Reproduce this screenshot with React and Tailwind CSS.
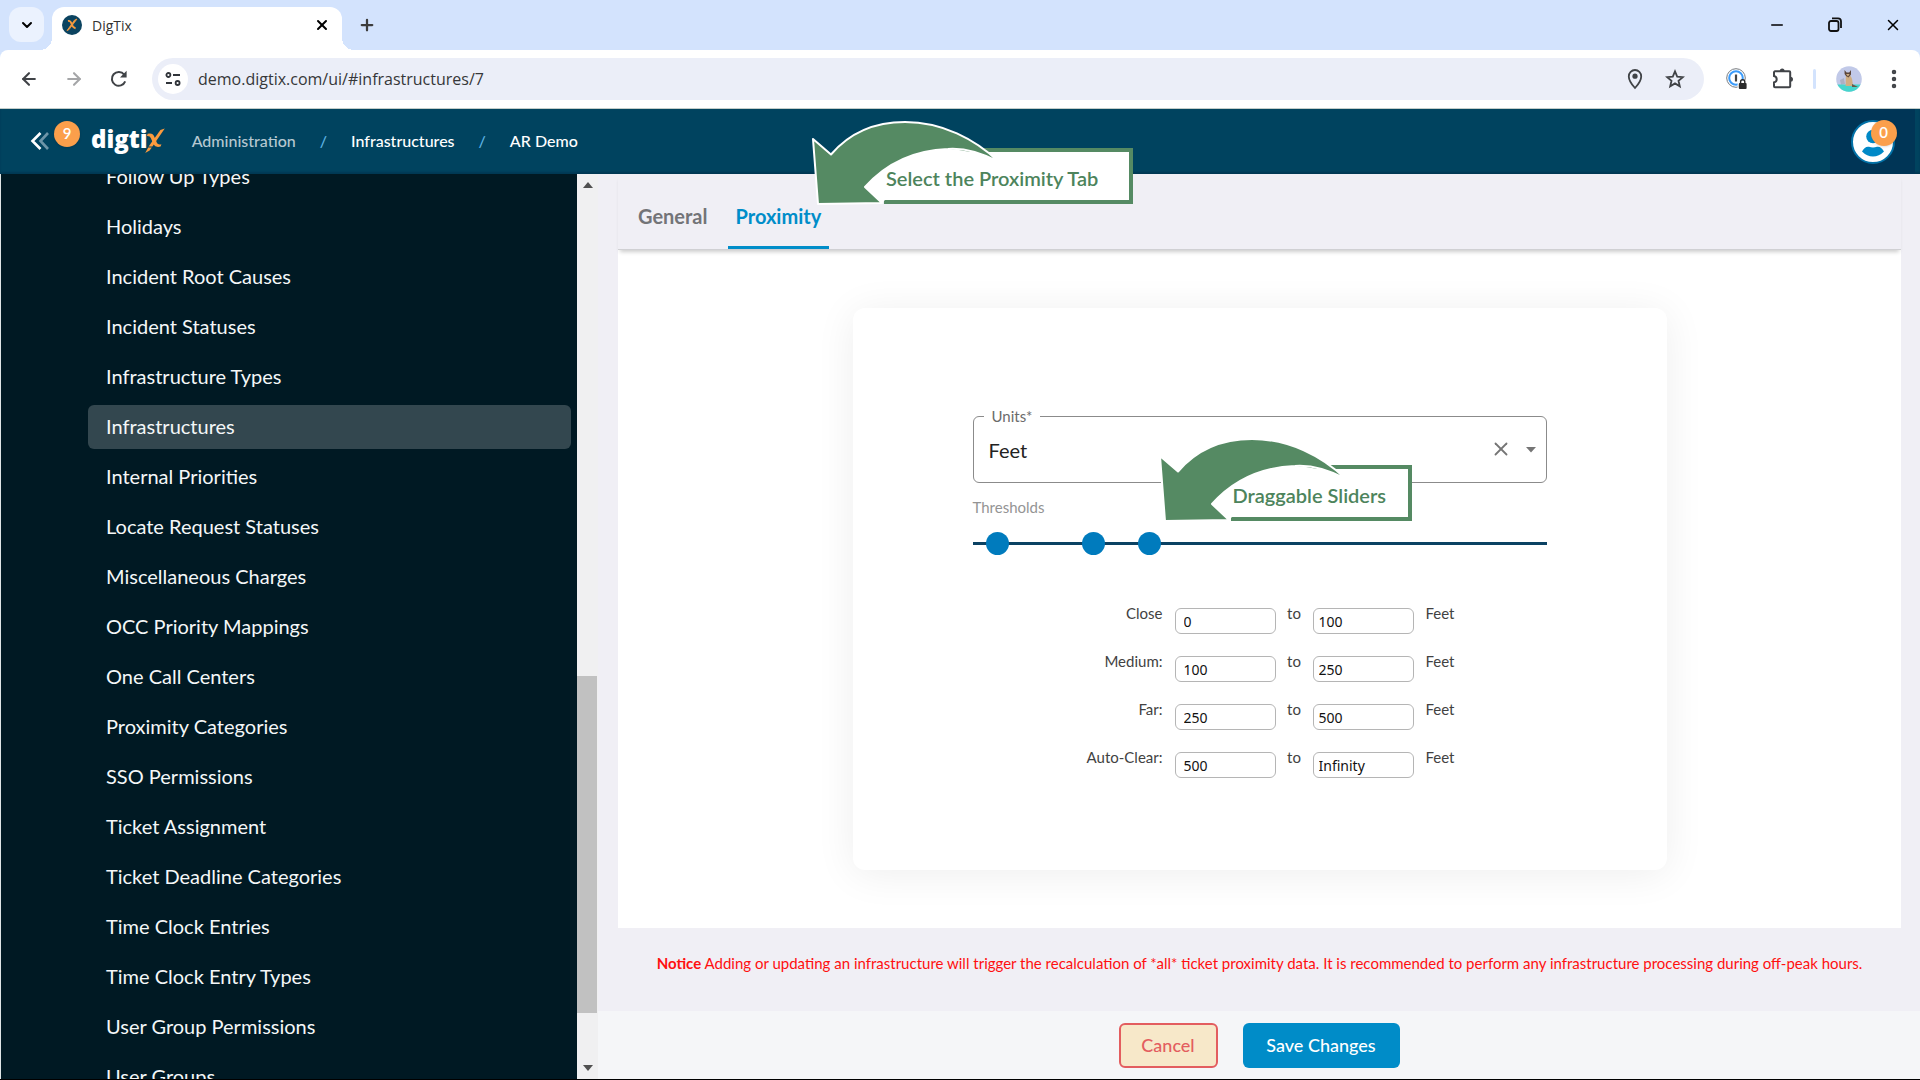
import { useState } from 'react';
import { ArrowLeft, ArrowRight, ChevronDown, Minus, Plus, X, EllipsisVertical } from 'lucide-react';

const menuItems = [
    'Follow Up Types',
    'Holidays',
    'Incident Root Causes',
    'Incident Statuses',
    'Infrastructure Types',
    'Infrastructures',
    'Internal Priorities',
    'Locate Request Statuses',
    'Miscellaneous Charges',
    'OCC Priority Mappings',
    'One Call Centers',
    'Proximity Categories',
    'SSO Permissions',
    'Ticket Assignment',
    'Ticket Deadline Categories',
    'Time Clock Entries',
    'Time Clock Entry Types',
    'User Group Permissions',
    'User Groups',
];

const thresholds = [
    { id: 'close', label: 'Close', from: '0', to: '100' },
    { id: 'medium', label: 'Medium:', from: '100', to: '250' },
    { id: 'far', label: 'Far:', from: '250', to: '500' },
    { id: 'auto-clear', label: 'Auto-Clear:', from: '500', to: 'Infinity' },
];

const Favicon = () => (
    <svg viewBox="0 0 20 20" className="w-5 h-5">
        <circle cx="10" cy="10" r="10" fill="#0b4360" />
        <path d="M15 4 L12.6 5 L5 15.6 L7 14.6 Z" fill="#f79a3e" stroke="#f79a3e" strokeWidth="0.8" />
        <path d="M6 6 Q8.5 5.4 9.6 9 T13.6 13.4" fill="none" stroke="#f79a3e" strokeWidth="1.8" />
    </svg>
);

const ReloadIcon = () => (
    <svg viewBox="0 0 18 18" className="w-[18px] h-[18px]">
        <path d="M15.2 11.4 A6.9 6.9 0 1 1 14.2 4.6" fill="none" stroke="#404347" strokeWidth="2" />
        <path d="M16.6 0.8 V7.4 H10 Z" fill="#404347" />
    </svg>
);

const SiteInfoIcon = () => (
    <svg viewBox="0 0 16 16" className="w-4 h-4" fill="none" stroke="#30343a" strokeWidth="1.8">
        <circle cx="3.4" cy="4" r="2" />
        <path d="M8 4h7M1 12h6" />
        <circle cx="12.6" cy="12" r="2" />
    </svg>
);

const LocationIcon = () => (
    <svg viewBox="0 0 20 22" className="w-5 h-[22px]">
        <path d="M10 20 C6 15.6 3.8 12.2 3.8 8.4 A6.2 6.4 0 0 1 16.2 8.4 C16.2 12.2 14 15.6 10 20 Z" fill="none" stroke="#404347" strokeWidth="1.8" />
        <circle cx="10" cy="8.2" r="2.6" fill="#404347" />
    </svg>
);

const StarIcon = () => (
    <svg viewBox="0 0 20 20" className="w-5 h-5">
        <path
            d="M10 2.4 L12.2 7.6 L17.8 8.1 L13.5 11.8 L14.8 17.3 L10 14.4 L5.2 17.3 L6.5 11.8 L2.2 8.1 L7.8 7.6 Z"
            fill="none"
            stroke="#404347"
            strokeWidth="1.8"
        />
    </svg>
);

const PasswordIcon = () => (
    <svg viewBox="0 0 22 22" className="w-[22px] h-[22px]" fill="none">
        <circle cx="10" cy="10" r="9.3" stroke="#777b80" strokeWidth="1" />
        <circle cx="10" cy="10" r="6.8" stroke="#3b9bfa" strokeWidth="2" />
        <path d="M10 6.5v7" stroke="#444" strokeWidth="2.2" />
        <path d="M11.6 12.2h10.4v9.8h-10.4z" fill="#fff" />
        <rect x="12.8" y="15" width="7.8" height="6" rx="1" fill="#2b2b2b" />
        <path d="M14.6 15.4v-1.6a2.1 2.1 0 0 1 4.2 0v1.6" stroke="#2b2b2b" strokeWidth="1.4" />
    </svg>
);

const PuzzleIcon = () => (
    <svg viewBox="0 0 22 22" className="w-[22px] h-[22px]">
        <path
            d="M3.5 3.3 H17.2 a1 1 0 0 1 1 1 V18.3 a1 1 0 0 1 -1 1 H3 a1 1 0 0 1 -1 -1 V14.4 C5.6 13.6 5.6 8.8 2 8 V4.3 a1 1 0 0 1 1 -1 Z"
            fill="none"
            stroke="#404347"
            strokeWidth="2"
        />
        <path d="M7.8 3 a2.4 2.6 0 0 1 4.8 0 Z M18.4 8.8 a2.6 2.5 0 0 1 0 5 Z" fill="#404347" />
    </svg>
);

const ProfilePicture = () => (
    <svg viewBox="0 0 26 26" className="w-[26px] h-[26px]">
        <defs>
            <clipPath id="profile-clip">
                <circle cx="13" cy="13" r="12.8" />
            </clipPath>
        </defs>
        <g clipPath="url(#profile-clip)">
            <rect width="26" height="26" fill="#c1c9e8" />
            <path d="M4 14 L8 12 L9 18 L5 19 Z" fill="#aab0c4" />
            <rect y="18.5" width="26" height="8" fill="#45d6cd" />
            <path d="M10 9 L14 9 Q17.4 14 16.5 20 H9.6 Q9.5 14 10 9" fill="#cfae83" />
            <path d="M16 18 L22 21 L16 21 Z" fill="#6b5848" />
            <path d="M8.5 4 L10.6 6.5 L13.2 6.5 L15 4 L15 8.4 L12.4 11.4 L10 10 L8.6 8 Z" fill="#5b4639" />
            <path d="M10 8 L13.6 8 L12 10.4 Z" fill="#cfae83" />
        </g>
    </svg>
);

const BrandMark = () => (
    <svg viewBox="0 0 22 26" className="w-[22px] h-[26px] -ml-1">
        <path d="M20.8 0.5 L16.4 2 L4.6 18.4 L8.4 18.4 Z" fill="#fb9b3e" />
        <path d="M4.2 19.4 L7.8 19.4 L5.6 22.4 L1.2 25 Z" fill="#fb9b3e" />
        <path d="M3.6 5.8 Q8.8 4.4 10.2 8.6 L13 15 Q13.8 17 17.4 16.2 L16.6 18.6 Q11.4 19.8 9.6 16.6 L6.8 10 Q6 7.8 3 8 Z" fill="#fb9b3e" />
    </svg>
);

const UserIcon = () => (
    <svg viewBox="0 0 44 44" className="w-11 h-11">
        <circle cx="22" cy="22" r="21" fill="#fff" stroke="#0272a8" strokeWidth="2" />
        <circle cx="22" cy="16.5" r="6.8" fill="#0089c7" />
        <path d="M11 31.5 Q14 26 18 26.8 Q22 28.4 26 26.8 Q30 26 33 31.5 Q28 36.6 22 36.6 Q16 36.6 11 31.5" fill="#0089c7" />
    </svg>
);

const Callout = ({ children }) => (
    <div className="relative pl-[72px] pt-[27px]">
        <div className="h-14 border-4 border-l-0 border-[#558a63] bg-white" />
        <svg viewBox="0 0 190 88" className="absolute left-0 top-0 w-[190px] h-[88px]">
            <path d="M53 66 C78 38 108 28 136 28 C158 29 175 35 188 42 L188 56 L74 78 L70 82 Z" fill="#fff" />
            <path
                d="M1 18 L19 33.5 C40 9 66 1 93 1 C130 1 163 18 187 41 C168 31 150 27 136 28 C108 29 78 38 53 66 L70 82 L6 83 Z"
                fill="#558a63"
                stroke="#fff"
                strokeWidth="2"
                strokeLinejoin="round"
            />
        </svg>
        <div className="absolute inset-x-0 top-[29px] h-14 pl-[74px] flex items-center text-xl font-semibold text-[#4d845c] whitespace-nowrap">
            {children}
        </div>
    </div>
);

const BrowserBar = () => (
    <div className="shrink-0 bg-[#d3e3fd]">
        <div className="flex items-end h-[50px] pl-[9px]">
            <button aria-label="Search tabs" className="w-[35px] h-[35px] mb-2 rounded-xl bg-[#ebf2fe] flex items-center justify-center">
                <ChevronDown className="w-4 h-4" strokeWidth={3} />
            </button>
            <div className="relative ml-2 w-[290px] h-[43px] rounded-t-xl bg-white flex items-center pl-[10px] pr-3 pb-2">
                <span className="absolute bottom-0 -left-3 w-3 h-3 bg-[radial-gradient(circle_at_0_0,transparent_12px,white_12px)]"></span>
                <span className="absolute bottom-0 -right-3 w-3 h-3 bg-[radial-gradient(circle_at_100%_0,transparent_12px,white_12px)]"></span>
                <Favicon />
                <span className="ml-[10px] pt-0.5 flex-1 font-['Open_Sans'] text-sm text-[#333]">DigTix</span>
                <button aria-label="Close tab">
                    <X className="w-4 h-4" strokeWidth={3} />
                </button>
            </div>
            <button aria-label="New tab" className="ml-4 mb-4">
                <Plus className="w-[18px] h-[18px] text-[#3c3c3c]" strokeWidth={3} />
            </button>
            <div className="ml-auto mb-4 flex items-center gap-10 pr-[18px]">
                <button aria-label="Minimize"><Minus className="w-[18px] h-[18px]" strokeWidth={2} /></button>
                <button aria-label="Restore">
                    <svg viewBox="0 0 18 18" className="w-[18px] h-[18px]" fill="none" stroke="#111" strokeWidth="1.8">
                        <rect x="3" y="5" width="9.5" height="10" rx="2" />
                        <path d="M6 2.4h6a3 3 0 0 1 3 3v6.6" />
                    </svg>
                </button>
                <button aria-label="Close window"><X className="w-[18px] h-[18px]" strokeWidth={2} /></button>
            </div>
        </div>
        <div className="flex items-center h-[58px] bg-white rounded-t-lg pl-[19px] pr-[14px] text-[#404347]">
            <button aria-label="Back"><ArrowLeft className="w-5 h-5" strokeWidth={2.5} /></button>
            <button aria-label="Forward" className="ml-[25px] text-[#a5a6a8]"><ArrowRight className="w-5 h-5" strokeWidth={2.5} /></button>
            <button aria-label="Reload" className="ml-[26px]"><ReloadIcon /></button>
            <div className="ml-6 flex-1 h-[42px] rounded-full bg-[#ebeef8] flex items-center pl-1.5 pr-[19px]">
                <span className="w-[30px] h-[30px] rounded-full bg-white flex items-center justify-center">
                    <SiteInfoIcon />
                </span>
                <input
                    aria-label="Address"
                    defaultValue="demo.digtix.com/ui/#infrastructures/7"
                    className="ml-[10px] flex-1 bg-transparent outline-none font-['Open_Sans'] text-base text-[#363739]"
                />
                <LocationIcon />
                <span className="ml-5"><StarIcon /></span>
            </div>
            <div className="ml-[22px] flex items-center">
                <button aria-label="Password manager"><PasswordIcon /></button>
                <button aria-label="Extensions" className="ml-6"><PuzzleIcon /></button>
                <span className="ml-[19px] w-[3px] h-5 rounded bg-[#d3e3fd]"></span>
                <button aria-label="Profile" className="ml-5"><ProfilePicture /></button>
                <button aria-label="Menu" className="ml-5"><EllipsisVertical className="w-6 h-6" strokeWidth={2.5} /></button>
            </div>
        </div>
    </div>
);

const Header = () => (
    <header className="shrink-0 h-[66px] flex items-center bg-[#00435f] border-t border-[#c3cdca] shadow-[inset_0_-2px_2px_#003853] text-white">
        <button aria-label="Collapse menu" className="relative ml-[30px] mb-0.5 w-12 h-12 flex items-center">
            <svg viewBox="0 0 20 20" className="w-5 h-5" fill="none" strokeWidth="2.6">
                <path d="M18 2 L10.5 10 L18 18" stroke="#6d95a8" />
                <path d="M10.5 2 L2.5 10 L10.5 18" stroke="#fff" />
            </svg>
            <span className="absolute left-6 top-1 w-[26px] h-[26px] rounded-full bg-[#fb9f4b] shadow flex items-center justify-center text-[15px] font-semibold">9</span>
        </button>
        <a href="#home" className="ml-[13px] mb-0.5 flex items-center">
            <span className="font-['Open_Sans'] text-2xl leading-6 font-extrabold pb-1">digti</span>
            <BrandMark />
        </a>
        <nav className="ml-[26px] mb-0.5 flex items-center text-base font-medium">
            <a href="#administration" className="text-[#b6c8d1]">Administration</a>
            <span className="mx-6 text-[#5fb5e5]">/</span>
            <a href="#infrastructures">Infrastructures</a>
            <span className="mx-6 text-[#5fb5e5]">/</span>
            <a href="#infrastructures/7">AR Demo</a>
        </nav>
        <button aria-label="Account" className="ml-auto mr-[5px] w-[85px] h-full bg-[#003556] flex items-center justify-center">
            <span className="relative">
                <UserIcon />
                <span className="absolute -right-0.5 top-0 w-[26px] h-[26px] rounded-full bg-[#fb9f4b] shadow flex items-center justify-center text-[15px] font-semibold">0</span>
            </span>
        </button>
    </header>
);

const Sidebar = () => (
    <aside className="w-[598px] shrink-0 flex border-l border-[#dfe5e6]">
        <div className="flex-1 overflow-hidden bg-[#001923]">
            <ul className="-mt-[19px] ml-[87px] mr-1.5 flex flex-col gap-1.5">
                {menuItems.map((item) => (
                    <li key={item}>
                        <a
                            href="#menu"
                            className={`flex items-center h-11 px-[18px] pb-0.5 rounded-md text-xl text-[#f4f7f8] ${item === 'Infrastructures' ? 'bg-[#33474f]' : ''}`}
                        >
                            {item}
                        </a>
                    </li>
                ))}
            </ul>
        </div>
        <div className="w-[21px] bg-[#f0f0f1] flex flex-col items-center justify-between py-2">
            <svg viewBox="0 0 10 6" className="w-[10px] h-[6px]"><path d="M0 6 L5 0 L10 6 Z" fill="#505050" /></svg>
            <div className="flex-1 w-full flex flex-col justify-end pr-px pb-[52px]">
                <div className="h-[337px] bg-[#c1c1c1]"></div>
            </div>
            <svg viewBox="0 0 10 6" className="w-[10px] h-[6px]"><path d="M0 0 L5 6 L10 0 Z" fill="#505050" /></svg>
        </div>
    </aside>
);

const UnitsField = () => {
    const [units, setUnits] = useState('feet');

    return (
        <div className="relative">
            <label htmlFor="units" className="absolute -top-2 left-[11px] px-2 bg-white text-[15px] leading-4 text-[#6b6b6b]">Units*</label>
            <select
                id="units"
                value={units}
                onChange={(e) => setUnits(e.target.value)}
                className="w-full h-[67px] appearance-none rounded-md border border-[#8b8b8b] bg-transparent pl-[15px] text-xl text-[#222]"
            >
                <option value=""></option>
                <option value="feet">Feet</option>
                <option value="meters">Meters</option>
            </select>
            <button aria-label="Clear units" onClick={() => setUnits('')} className="absolute right-[35px] top-[22px]">
                <X className="w-[22px] h-[22px] text-[#757575]" strokeWidth={2} />
            </button>
            <svg viewBox="0 0 10 6" className="absolute right-[11px] top-[31px] w-[10px] h-[6px] pointer-events-none">
                <path d="M0 0 L5 5.5 L10 0 Z" fill="#757575" />
            </svg>
            <div className="absolute left-[186px] top-[22px] w-[253px]">
                <Callout>Draggable Sliders</Callout>
            </div>
        </div>
    );
};

const ThresholdSlider = () => {
    const [stops, setStops] = useState([25, 199, 301]);

    const moveStop = (index, value) => {
        setStops(stops.map((stop, i) => (i === index ? Number(value) : stop)));
    };

    return (
        <div className="relative h-6 flex items-center">
            <div className="w-full h-[3px] bg-[#0b4263]"></div>
            {stops.map((stop, index) => (
                <input
                    key={index}
                    type="range"
                    min="0"
                    max="1000"
                    value={stop}
                    onChange={(e) => moveStop(index, e.target.value)}
                    aria-label={`Threshold ${index + 1}`}
                    className="absolute inset-0 w-full h-6 appearance-none bg-transparent pointer-events-none [&::-webkit-slider-thumb]:pointer-events-auto [&::-webkit-slider-thumb]:appearance-none [&::-webkit-slider-thumb]:w-[23px] [&::-webkit-slider-thumb]:h-[23px] [&::-webkit-slider-thumb]:rounded-full [&::-webkit-slider-thumb]:bg-[#007bbd]"
                />
            ))}
        </div>
    );
};

const ProximityForm = () => (
    <div className="w-full max-w-[814px] rounded-xl bg-white px-[120px] pt-[108px] pb-[92px] shadow-[0_4px_40px_rgba(0,0,0,0.07)]">
        <UnitsField />
        <p className="mt-3.5 leading-5 text-[15px] text-[#949494]">Thresholds</p>
        <div className="mt-3.5">
            <ThresholdSlider />
        </div>
        <div className="mt-12 flex flex-col gap-[17px]">
            {thresholds.map((row) => (
                <div key={row.id} className="flex items-start text-[15px] leading-5 text-[#424242]">
                    <label htmlFor={`${row.id}-from`} className="w-[190px] text-right">{row.label}</label>
                    <input
                        id={`${row.id}-from`}
                        defaultValue={row.from}
                        className="ml-3 mt-[5px] w-[101px] h-[26px] rounded-md border border-[#b5b5b5] pl-2 font-['Noto_Sans'] text-sm text-[#111]"
                    />
                    <label htmlFor={`${row.id}-to`} className="w-[37px] text-center">to</label>
                    <input
                        id={`${row.id}-to`}
                        defaultValue={row.to}
                        className="mt-[5px] w-[101px] h-[26px] rounded-md border border-[#b5b5b5] pl-[5px] font-['Noto_Sans'] text-sm text-[#111]"
                    />
                    <span className="ml-3">Feet</span>
                </div>
            ))}
        </div>
    </div>
);

export default function App() {
    return (
        <div className="h-screen flex flex-col overflow-hidden font-['Lato',sans-serif] border-b border-black">
            <BrowserBar />
            <Header />
            <div className="flex-1 min-h-0 flex">
                <Sidebar />
                <main className="relative flex-1 min-w-0 flex flex-col bg-[#f0eff5]">
                    <div className="flex-1 min-h-0 flex flex-col pl-5 pr-[19px]">
                        <div className="relative h-[76px] shrink-0 flex items-end pl-3 border-b border-[#d0d0d3] shadow-[0_4px_4px_-2px_rgba(0,0,0,0.2)] text-xl font-bold">
                            <button className="h-[62px] px-2 pb-1 text-[#737478]">General</button>
                            <button className="ml-3 h-[62px] px-2 pb-px border-b-[3px] border-[#008dc9] text-[#008dc9]">Proximity</button>
                        </div>
                        <section className="flex-1 flex items-center justify-center bg-white">
                            <ProximityForm />
                        </section>
                        <p className="h-[83px] shrink-0 pb-3 flex items-center justify-center text-[15px] text-[#ff1010]">
                            <span><strong>Notice</strong> Adding or updating an infrastructure will trigger the recalculation of *all* ticket proximity data. It is recommended to perform any infrastructure processing during off-peak hours.</span>
                        </p>
                    </div>
                    <footer className="h-[68px] shrink-0 flex items-center justify-center gap-[25px] bg-[#f5f6f8] text-lg font-medium">
                        <button className="w-[99px] h-[45px] rounded-md border-2 border-[#e35d5f] bg-[#f7e8c9] text-[#e35d5f]">Cancel</button>
                        <button className="w-[157px] h-[45px] rounded-md bg-[#008cc8] text-white">Save Changes</button>
                    </footer>
                    <div className="absolute left-[214px] -top-[53px] w-[321px]">
                        <Callout>Select the Proximity Tab</Callout>
                    </div>
                </main>
            </div>
        </div>
    );
}
